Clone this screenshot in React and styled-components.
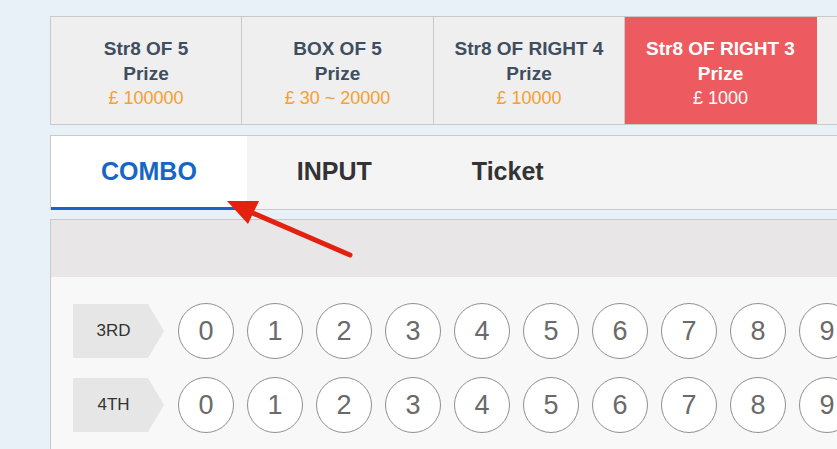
import React from 'react'
import styled, { createGlobalStyle } from 'styled-components'

const GlobalStyle = createGlobalStyle`
    html, body {
        margin: 0;
        padding: 0;
        background: #e8f0f8;
        overflow: hidden;
    }
    body {
        font-family: "Liberation Sans", Arial, sans-serif;
    }
`

const Page = styled.div`
    position: relative;
    width: 837px;
    height: 449px;
    overflow: hidden;
`

const Content = styled.div`
    width: 1200px;
    padding: 16px 0 0 50px;
`

const PrizeBar = styled.div`
    display: flex;
    border: 1px solid #c9c9c9;
    border-right: none;
    background: #efefef;
`

const PrizeCell = styled.div`
    width: ${p => p.w}px;
    height: 75px;
    padding: 19px 0 13px;
    border-right: 1px solid ${p => (p.active ? '#ed5b61' : '#c9c9c9')};
    background: ${p => (p.active ? '#ed5b61' : 'transparent')};
    text-align: center;
    font-size: 18px;
    line-height: 25px;
    color: ${p => (p.active ? '#fff' : '#3e4e5e')};
`

const PrizeTitle = styled.div`
    font-size: 19px;
    font-weight: bold;
`

const PrizeAmount = styled.div`
    color: ${p => (p.active ? '#fff' : '#f5a031')};
`

const TabBar = styled.div`
    display: flex;
    margin-top: 10px;
    border: 1px solid #c9c9c9;
    border-right: none;
    background: #f4f4f4;
`

const Tab = styled.div`
    display: flex;
    align-items: center;
    height: 74px;
    margin-bottom: -1px;
    padding: 0 50px;
    box-sizing: border-box;
    background: ${p => (p.active ? '#fff' : 'transparent')};
    border-bottom: 3px solid ${p => (p.active ? '#1566c6' : 'transparent')};
    font-size: 25px;
    font-weight: bold;
    color: ${p => (p.active ? '#1566c6' : '#333')};
`

const Board = styled.div`
    margin-top: 9px;
    border: 1px solid #c9c9c9;
    border-right: none;
    border-bottom: none;
    background: #f8f8f8;
    height: 300px;
`

const BoardHeader = styled.div`
    height: 57px;
    background: #e8e6e7;
`

const Rows = styled.div`
    display: flex;
    flex-direction: column;
    gap: 18px;
    padding: 26px 0 0 22px;
`

const Row = styled.div`
    display: flex;
    align-items: center;
    gap: 14px;
`

const PlaceTag = styled.div`
    display: flex;
    align-items: center;
    justify-content: center;
    width: 91px;
    height: 54px;
    padding-right: 10px;
    box-sizing: border-box;
    background: #e6e6e6;
    clip-path: polygon(0 0, 75px 0, 100% 50%, 75px 100%, 0 100%);
    font-size: 17px;
    color: #333;
`

const Balls = styled.div`
    display: flex;
    gap: 13px;
`

const Ball = styled.div`
    display: flex;
    align-items: center;
    justify-content: center;
    width: 56px;
    height: 56px;
    box-sizing: border-box;
    border: 1.5px solid #8f8f8f;
    border-radius: 50%;
    background: #fff;
    font-size: 27px;
    color: #6a6a6a;
`

const Pointer = styled.svg`
    position: absolute;
    top: 0;
    left: 0;
    pointer-events: none;
`

const prizes = [
    { title: 'Str8 OF 5', amount: '£ 100000', w: 190 },
    { title: 'BOX OF 5', amount: '£ 30 ~ 20000', w: 191 },
    { title: 'Str8 OF RIGHT 4', amount: '£ 10000', w: 190 },
    { title: 'Str8 OF RIGHT 3', amount: '£ 1000', w: 191, active: true },
]

const tabs = ['COMBO', 'INPUT', 'Ticket']
const places = ['3RD', '4TH']
const digits = [0, 1, 2, 3, 4, 5, 6, 7, 8, 9]

const App = () => {
    return (
        <>
            <GlobalStyle />
            <Page>
                <Content>
                    <PrizeBar>
                        {prizes.map(p => (
                            <PrizeCell key={p.title} w={p.w} active={p.active}>
                                <PrizeTitle>{p.title}</PrizeTitle>
                                <PrizeTitle>Prize</PrizeTitle>
                                <PrizeAmount active={p.active}>{p.amount}</PrizeAmount>
                            </PrizeCell>
                        ))}
                        {/* next prize card, scrolled out of view */}
                        <PrizeCell w={191} />
                    </PrizeBar>

                    <TabBar>
                        {tabs.map((t, i) => (
                            <Tab key={t} active={i === 0}>{t}</Tab>
                        ))}
                    </TabBar>

                    <Board>
                        <BoardHeader />
                        <Rows>
                            {places.map(place => (
                                <Row key={place}>
                                    <PlaceTag>{place}</PlaceTag>
                                    <Balls>
                                        {digits.map(d => <Ball key={d}>{d}</Ball>)}
                                    </Balls>
                                </Row>
                            ))}
                        </Rows>
                    </Board>
                </Content>

                {/* annotation arrow drawn over the tabs */}
                <Pointer width="837" height="449" viewBox="0 0 837 449">
                    <line x1="350" y1="255" x2="248" y2="211" stroke="#e2220f" strokeWidth="5" strokeLinecap="round" />
                    <polygon points="227,201 259,201 248,224" fill="#e2220f" />
                </Pointer>
            </Page>
        </>
    )
}

export default App
